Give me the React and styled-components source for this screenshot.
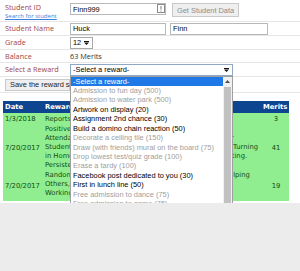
import React from "react";
import styled, { createGlobalStyle } from "styled-components";

const GlobalStyle = createGlobalStyle`
  html, body { margin: 0; padding: 0; background: #ececec; }
  body { font-family: "Open Sans", sans-serif; }
  * { box-sizing: border-box; }
`;

const Panel = styled.div`
  background: #fff;
  width: 300px;
  padding-bottom: 2px;
`;

const Row = styled.div`
  display: grid;
  grid-template-columns: 65px auto;
  align-items: ${(p) => (p.$top ? "start" : "center")};
  height: ${(p) => p.$h}px;
  padding: ${(p) => (p.$top ? "3px" : "0")} 0 0 5px;
  border-bottom: 1px solid #e6e6e6;
`;

const Label = styled.div`
  font: 7.3px/9px "Open Sans", sans-serif;
  color: #a3453f;
  white-space: nowrap;
`;

const SubLink = styled.a`
  display: block;
  font: 6px/6px "Open Sans", sans-serif;
  color: #3b7ddd;
  text-decoration: underline;
  margin-top: 1px;
`;

const Field = styled.div`
  display: flex;
  align-items: flex-start;
  gap: ${(p) => p.$gap || 4}px;
`;

const InputWrap = styled.div`
  position: relative;
`;

const Input = styled.input`
  display: block;
  width: ${(p) => p.$w}px;
  height: 12px;
  border: 1px solid #b8b8b8;
  padding: 0 2px;
  margin: 0;
  font: 7.4px "Liberation Sans", Arial, sans-serif;
  color: #000;
  background: #fff;
  outline: none;
`;

const FieldIcon = styled.svg`
  position: absolute;
  right: 1px;
  top: 1px;
`;

const Button = styled.button`
  height: ${(p) => p.$h || 14}px;
  margin: 0;
  padding: 0 4px;
  border: 1px solid #c9c9c9;
  background: #efefef;
  color: ${(p) => (p.$dim ? "#8c8c8c" : "#222")};
  font: 7.4px "Liberation Sans", Arial, sans-serif;
  white-space: nowrap;
`;

const ValueText = styled.span`
  font: 7.3px/9px "Open Sans", sans-serif;
  color: #333;
`;

const SelectWrap = styled.div`
  position: relative;
  width: ${(p) => p.$w}px;
`;

const SelectBox = styled.div`
  display: flex;
  align-items: center;
  justify-content: space-between;
  width: ${(p) => p.$w}px;
  height: 12px;
  border: 1px solid ${(p) => (p.$focus ? "#8fa8c6" : "#a8a8a8")};
  padding: 0 3px 0 2px;
  background: #fff;
  font: 7.4px "Liberation Sans", Arial, sans-serif;
  color: #000;
`;

const Caret = () => (
  <svg width="5" height="4" viewBox="0 0 5 4">
    <rect x="0" y="0" width="5" height="1" fill="#111" />
    <path d="M0 1.5h5L2.5 4z" fill="#111" />
  </svg>
);

const ListBox = styled.div`
  position: absolute;
  top: 100%;
  left: 0;
  width: ${(p) => p.$w}px;
  height: 191px;
  display: flex;
  border: 1px solid #a0a0a0;
  background: #fff;
  z-index: 5;
`;

const Options = styled.div`
  flex: 1;
  overflow: hidden;
`;

const Option = styled.div`
  height: 9.45px;
  padding-left: 2px;
  font: 7.4px/9.45px "Liberation Sans", Arial, sans-serif;
  white-space: nowrap;
  background: ${(p) => (p.$selected ? "#1e78e6" : "transparent")};
  color: ${(p) => (p.$selected ? "#fff" : p.$disabled ? "#9e9e9e" : "#000")};
`;

const ScrollBar = styled.div`
  width: 9px;
  display: flex;
  flex-direction: column;
  background: #f1f1f1;
`;

const ScrollArrow = styled.div`
  height: 9px;
  display: flex;
  align-items: center;
  justify-content: center;
`;

const Track = styled.div`
  flex: 1;
  padding: 1px 1px 30px;
  display: flex;
`;

const Thumb = styled.div`
  flex: 1;
  background: #c1c1c1;
`;

const Table = styled.table`
  margin: 8px 0 0 3px;
  width: 286px;
  border-collapse: collapse;
  table-layout: fixed;
  font: 6.8px/9px "DejaVu Sans", Verdana, sans-serif;
`;

const Th = styled.th`
  height: 12px;
  padding: 0 ${(p) => (p.$align === "right" ? "2px" : "0")} 0 2px;
  background: #0e4590;
  color: #fff;
  font-weight: bold;
  text-align: ${(p) => p.$align || "left"};
`;

const Td = styled.td`
  height: ${(p) => p.$h}px;
  padding: 0 0 0 2px;
  background: #90ee90;
  color: #134d13;
  vertical-align: ${(p) => p.$valign || "middle"};
  text-align: ${(p) => p.$align || "left"};
  white-space: nowrap;
  overflow: hidden;
`;

const Line = styled.div`
  white-space: nowrap;
`;

const rewards = [
  ["Admission to fun day", 500],
  ["Admission to water park", 500],
  ["Artwork on display", 20],
  ["Assignment 2nd chance", 30],
  ["Build a domino chain reaction", 50],
  ["Decorate a ceiling tile", 150],
  ["Draw (with friends) mural on the board", 75],
  ["Drop lowest test/quiz grade", 100],
  ["Erase a tardy", 100],
  ["Facebook post dedicated to you", 30],
  ["First in lunch line", 50],
  ["Free admission to dance", 75],
  ["Free admission to game", 75],
  ["Free dress", 100],
  ["Game time", 20],
  ["Game with teacher/counselor/admin", 75],
  ["Hat day", 10],
  ["Karaoke time", 20],
  ["Lead the Pledge on the announcements", 50],
];

const balance = 63;

const history = [
  { date: "1/3/2018", lines: ["Reports to class prepared"], merits: 3, h: 12 },
  {
    date: "7/20/2017",
    lines: [
      "Positive Attitude toward Learning",
      "Attendances for the whole semester, Classroom Leader",
      "Student Responsibility Award for all Homework and for Turning",
      "in Homework on time and always meet deadlines, Meeting.",
      "Persistence in the face of difficulty",
    ],
    merits: 41,
    h: 46,
  },
  {
    date: "7/20/2017",
    lines: [
      "Random Acts of Kindness toward classmate, Always Helping",
      "Others, Sharing supplies",
      "Working together as a team",
    ],
    merits: 19,
    h: 30,
  },
];

export default function App() {
  return (
    <>
      <GlobalStyle />
      <Panel>
        <Row $h={22} $top>
          <div>
            <Label>Student ID</Label>
            <SubLink href="#">Search for student</SubLink>
          </div>
          <Field $gap={6}>
            <InputWrap>
              <Input $w={96} defaultValue="Finn999" />
              <FieldIcon width="8" height="9" viewBox="0 0 8 9">
                <rect x="0.5" y="0.5" width="7" height="8" fill="#fff" stroke="#8a8a8a" />
                <rect x="3.5" y="2" width="1" height="3.5" fill="#777" />
                <rect x="3.5" y="6.5" width="1" height="1" fill="#777" />
              </FieldIcon>
            </InputWrap>
            <Button $dim>Get Student Data</Button>
          </Field>
        </Row>
        <Row $h={14}>
          <Label>Student Name</Label>
          <Field>
            <Input $w={96} defaultValue="Huck" />
            <Input $w={98} defaultValue="Finn" />
          </Field>
        </Row>
        <Row $h={14}>
          <Label>Grade</Label>
          <SelectBox $w={23}>
            12 <Caret />
          </SelectBox>
        </Row>
        <Row $h={13}>
          <Label>Balance</Label>
          <ValueText>{balance} Merits</ValueText>
        </Row>
        <Row $h={14}>
          <Label>Select a Reward</Label>
          <SelectWrap $w={163}>
            <SelectBox $w={163} $focus>
              -Select a reward- <Caret />
            </SelectBox>
            <ListBox $w={163}>
              <Options>
                <Option $selected>-Select a reward-</Option>
                {rewards.map(([name, cost]) => (
                  <Option key={name} $disabled={cost > balance}>
                    {name} ({cost})
                  </Option>
                ))}
              </Options>
              <ScrollBar>
                <ScrollArrow>
                  <svg width="5" height="3" viewBox="0 0 5 3">
                    <path d="M0 3h5L2.5 0z" fill="#505050" />
                  </svg>
                </ScrollArrow>
                <Track>
                  <Thumb />
                </Track>
                <ScrollArrow>
                  <svg width="5" height="3" viewBox="0 0 5 3">
                    <path d="M0 0h5L2.5 3z" fill="#505050" />
                  </svg>
                </ScrollArrow>
              </ScrollBar>
            </ListBox>
          </SelectWrap>
        </Row>
        <Row $h={16}>
          <Button $h={12}>Save the reward selection</Button>
        </Row>
        <Table>
          <colgroup>
            <col style={{ width: 40 }} />
            <col style={{ width: 218 }} />
            <col style={{ width: 28 }} />
          </colgroup>
          <thead>
            <tr>
              <Th>Date</Th>
              <Th>Reward</Th>
              <Th $align="right">Merits</Th>
            </tr>
          </thead>
          <tbody>
            {history.map((r, i) => (
              <tr key={i}>
                <Td $h={r.h}>{r.date}</Td>
                <Td $h={r.h} $valign={r.lines.length > 1 ? "top" : "middle"}>
                  {r.lines.map((l) => (
                    <Line key={l}>{l}</Line>
                  ))}
                </Td>
                <Td $h={r.h} $align="center">
                  {r.merits}
                </Td>
              </tr>
            ))}
          </tbody>
        </Table>
      </Panel>
    </>
  );
}
